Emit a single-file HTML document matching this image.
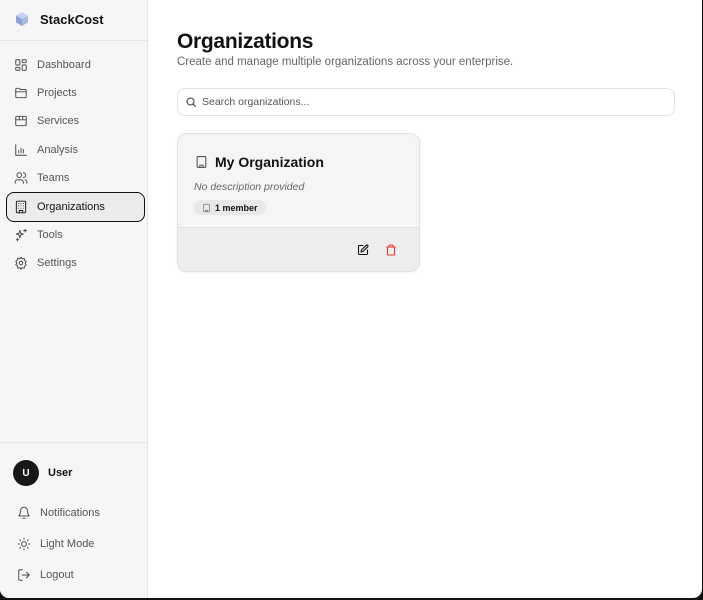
<!DOCTYPE html>
<html><head><style>
*{box-sizing:border-box;margin:0;padding:0}
body{width:703px;height:600px;background:#111;font-family:"Liberation Sans",sans-serif;overflow:hidden;position:relative}
.win{position:absolute;left:0;top:0;width:702px;height:598px;background:#fff;border-radius:0 0 9px 9px;overflow:hidden}
.side{position:absolute;left:0;top:0;width:148px;height:598px;background:#f6f6f6;border-right:1px solid #e6e6e6}
.brand{position:absolute;left:14px;top:11px;font-weight:bold;font-size:13px;color:#111;display:flex;align-items:center}
.brand span{margin-left:10px}
.hr{position:absolute;left:0;width:148px;height:1px;background:#e6e6e6}
.nav{position:absolute;left:14px;font-size:11px;color:#555;display:flex;align-items:center;height:16px}
.nav svg{width:14px;height:14px;margin-right:9px;stroke:#444;fill:none;stroke-width:1.6;stroke-linecap:round;stroke-linejoin:round}
.active{position:absolute;left:6px;top:192px;width:139px;height:30px;border:1.5px solid #111;border-radius:8px;background:#ececec}
.main{position:absolute;left:177px}
h1{position:absolute;left:177px;top:30px;font-size:21px;font-weight:bold;color:#111;letter-spacing:-.3px}
.sub{position:absolute;left:177px;top:56px;font-size:11.5px;color:#666}
.search{position:absolute;left:177px;top:88px;width:498px;height:28px;border:1px solid #e2e2e2;border-radius:8px;font-size:10.5px;color:#555;display:flex;align-items:center;padding-left:7px}
.card{position:absolute;left:177px;top:133px;width:243px;height:139px;border:1px solid #e2e2e2;border-radius:10px;background:#f5f5f5;overflow:hidden;box-shadow:0 1px 2px rgba(0,0,0,.06)}
.foot{position:absolute;left:0;top:93px;width:100%;height:46px;background:#eeeeee;border-top:1px solid #e2e2e2}
</style></head><body><div class="win">
<div class="side">
 <div class="brand"><svg width="16" height="16" viewBox="0 0 16 16"><path d="M8 1 14 4.5 8 8 2 4.5Z" fill="#c9d3ee"/><path d="M2 4.5 8 8v7L2 11.5Z" fill="#8fa2d6"/><path d="M14 4.5 8 8v7l6-3.5Z" fill="#aab8e2"/></svg><span>StackCost</span></div>
 <div class="hr" style="top:40px"></div>
 <div class="active"></div>
 <div class="nav" style="top:57px"><svg viewBox="0 0 24 24"><rect x="3" y="3" width="7" height="9" rx="1"/><rect x="14" y="3" width="7" height="5" rx="1"/><rect x="14" y="12" width="7" height="9" rx="1"/><rect x="3" y="16" width="7" height="5" rx="1"/></svg>Dashboard</div>
 <div class="nav" style="top:85px"><svg viewBox="0 0 24 24"><path d="M3 6a2 2 0 0 1 2-2h4l2 2h8a2 2 0 0 1 2 2v10a2 2 0 0 1-2 2H5a2 2 0 0 1-2-2Z"/><path d="M3 10h18"/></svg>Projects</div>
 <div class="nav" style="top:113px"><svg viewBox="0 0 24 24"><rect x="3" y="4" width="18" height="16" rx="2"/><path d="M3 10h18M9 4v6M15 4v6"/></svg>Services</div>
 <div class="nav" style="top:142px"><svg viewBox="0 0 24 24"><path d="M3 3v18h18M8 17v-4M12 17V9M16 17v-6"/></svg>Analysis</div>
 <div class="nav" style="top:170px"><svg viewBox="0 0 24 24"><circle cx="9" cy="7" r="4"/><path d="M2 21v-2a4 4 0 0 1 4-4h6a4 4 0 0 1 4 4v2M16 3a4 4 0 0 1 0 8M22 21v-2a4 4 0 0 0-3-3.9"/></svg>Teams</div>
 <div class="nav" style="top:199px;color:#111"><svg viewBox="0 0 24 24" style="stroke:#111"><rect x="4" y="2" width="16" height="20" rx="2"/><path d="M9 22v-4h6v4M8 6h.01M12 6h.01M16 6h.01M8 10h.01M12 10h.01M16 10h.01M8 14h.01M12 14h.01M16 14h.01"/></svg>Organizations</div>
 <div class="nav" style="top:227px"><svg viewBox="0 0 24 24"><path d="M10 4l1.5 5L16 10.5l-4.5 1.5L10 17l-1.5-5L4 10.5 8.5 9Z"/><path d="M19 2v5M16.5 4.5h5M6 18v4M4 20h4"/></svg>Tools</div>
 <div class="nav" style="top:255px"><svg viewBox="0 0 24 24"><circle cx="12" cy="12" r="3"/><path d="M12 2l2 3 3.5-1 .5 3.5 3 2-2 3 2 3-3 2-.5 3.5-3.5-1-2 3-2-3-3.5 1L6 17l-3-2 2-3-2-3 3-2 .5-3.5L10 5Z"/></svg>Settings</div>
 <div class="hr" style="top:442px"></div>
 <div style="position:absolute;left:13px;top:460px;width:26px;height:26px;border-radius:50%;background:#171717;color:#fff;font-size:10px;font-weight:bold;display:flex;align-items:center;justify-content:center">U</div>
 <div style="position:absolute;left:48px;top:467px;font-size:11px;font-weight:bold;color:#111">User</div>
 <div class="nav" style="top:505px;left:17px"><svg viewBox="0 0 24 24"><path d="M6 8a6 6 0 0 1 12 0c0 7 3 9 3 9H3s3-2 3-9M10 21h4"/></svg>Notifications</div>
 <div class="nav" style="top:536px;left:17px"><svg viewBox="0 0 24 24"><circle cx="12" cy="12" r="4"/><path d="M12 2v2M12 20v2M4.9 4.9l1.4 1.4M17.7 17.7l1.4 1.4M2 12h2M20 12h2M4.9 19.1l1.4-1.4M17.7 6.3l1.4-1.4"/></svg>Light Mode</div>
 <div class="nav" style="top:567px;left:17px"><svg viewBox="0 0 24 24"><path d="M9 21H5a2 2 0 0 1-2-2V5a2 2 0 0 1 2-2h4M16 17l5-5-5-5M21 12H9"/></svg>Logout</div>
</div>
<h1>Organizations</h1>
<div class="sub">Create and manage multiple organizations across your enterprise.</div>
<div class="search"><svg width="12" height="12" viewBox="0 0 24 24" fill="none" stroke="#444" stroke-width="2.2" stroke-linecap="round"><circle cx="11" cy="11" r="7"/><path d="M21 21l-5-5"/></svg><span style="margin-left:5px">Search organizations...</span></div>
<div class="card">
 <div style="position:absolute;left:17px;top:20px;display:flex;align-items:center;font-size:14px;font-weight:bold;color:#111"><svg width="13" height="14" viewBox="0 0 24 24" fill="none" stroke="#555" stroke-width="2"><rect x="4" y="2" width="16" height="20" rx="2"/><path d="M9 22v-4h6v4M8 6h.01M12 6h.01M16 6h.01M8 10h.01M12 10h.01M16 10h.01M8 14h.01M12 14h.01M16 14h.01"/></svg><span style="margin-left:7px">My Organization</span></div>
 <div style="position:absolute;left:16px;top:47px;font-size:10.5px;font-style:italic;color:#666">No description provided</div>
 <div style="position:absolute;left:16px;top:66px;height:15px;padding:0 8px;border-radius:8px;background:#e8e8e8;font-size:9px;font-weight:bold;color:#111;display:flex;align-items:center"><svg width="9" height="10" viewBox="0 0 24 24" fill="none" stroke="#777" stroke-width="2"><rect x="4" y="2" width="16" height="20" rx="2"/><path d="M9 22v-4h6v4"/></svg><span style="margin-left:4px">1 member</span></div>
 <div class="foot">
  <svg style="position:absolute;left:179px;top:16px" width="12" height="12" viewBox="0 0 24 24" fill="none" stroke="#111" stroke-width="2.2" stroke-linecap="round" stroke-linejoin="round"><path d="M12 3H5a2 2 0 0 0-2 2v14a2 2 0 0 0 2 2h14a2 2 0 0 0 2-2v-7"/><path d="M18.4 2.6a2 2 0 0 1 3 3L12 15l-4 1 1-4Z"/></svg>
  <svg style="position:absolute;left:207px;top:16px" width="12" height="12" viewBox="0 0 24 24" fill="none" stroke="#e53935" stroke-width="2.2" stroke-linecap="round" stroke-linejoin="round"><path d="M3 6h18M19 6v14a2 2 0 0 1-2 2H7a2 2 0 0 1-2-2V6M8 6V4a2 2 0 0 1 2-2h4a2 2 0 0 1 2 2v2"/></svg>
 </div>
</div>
</div></body></html>
